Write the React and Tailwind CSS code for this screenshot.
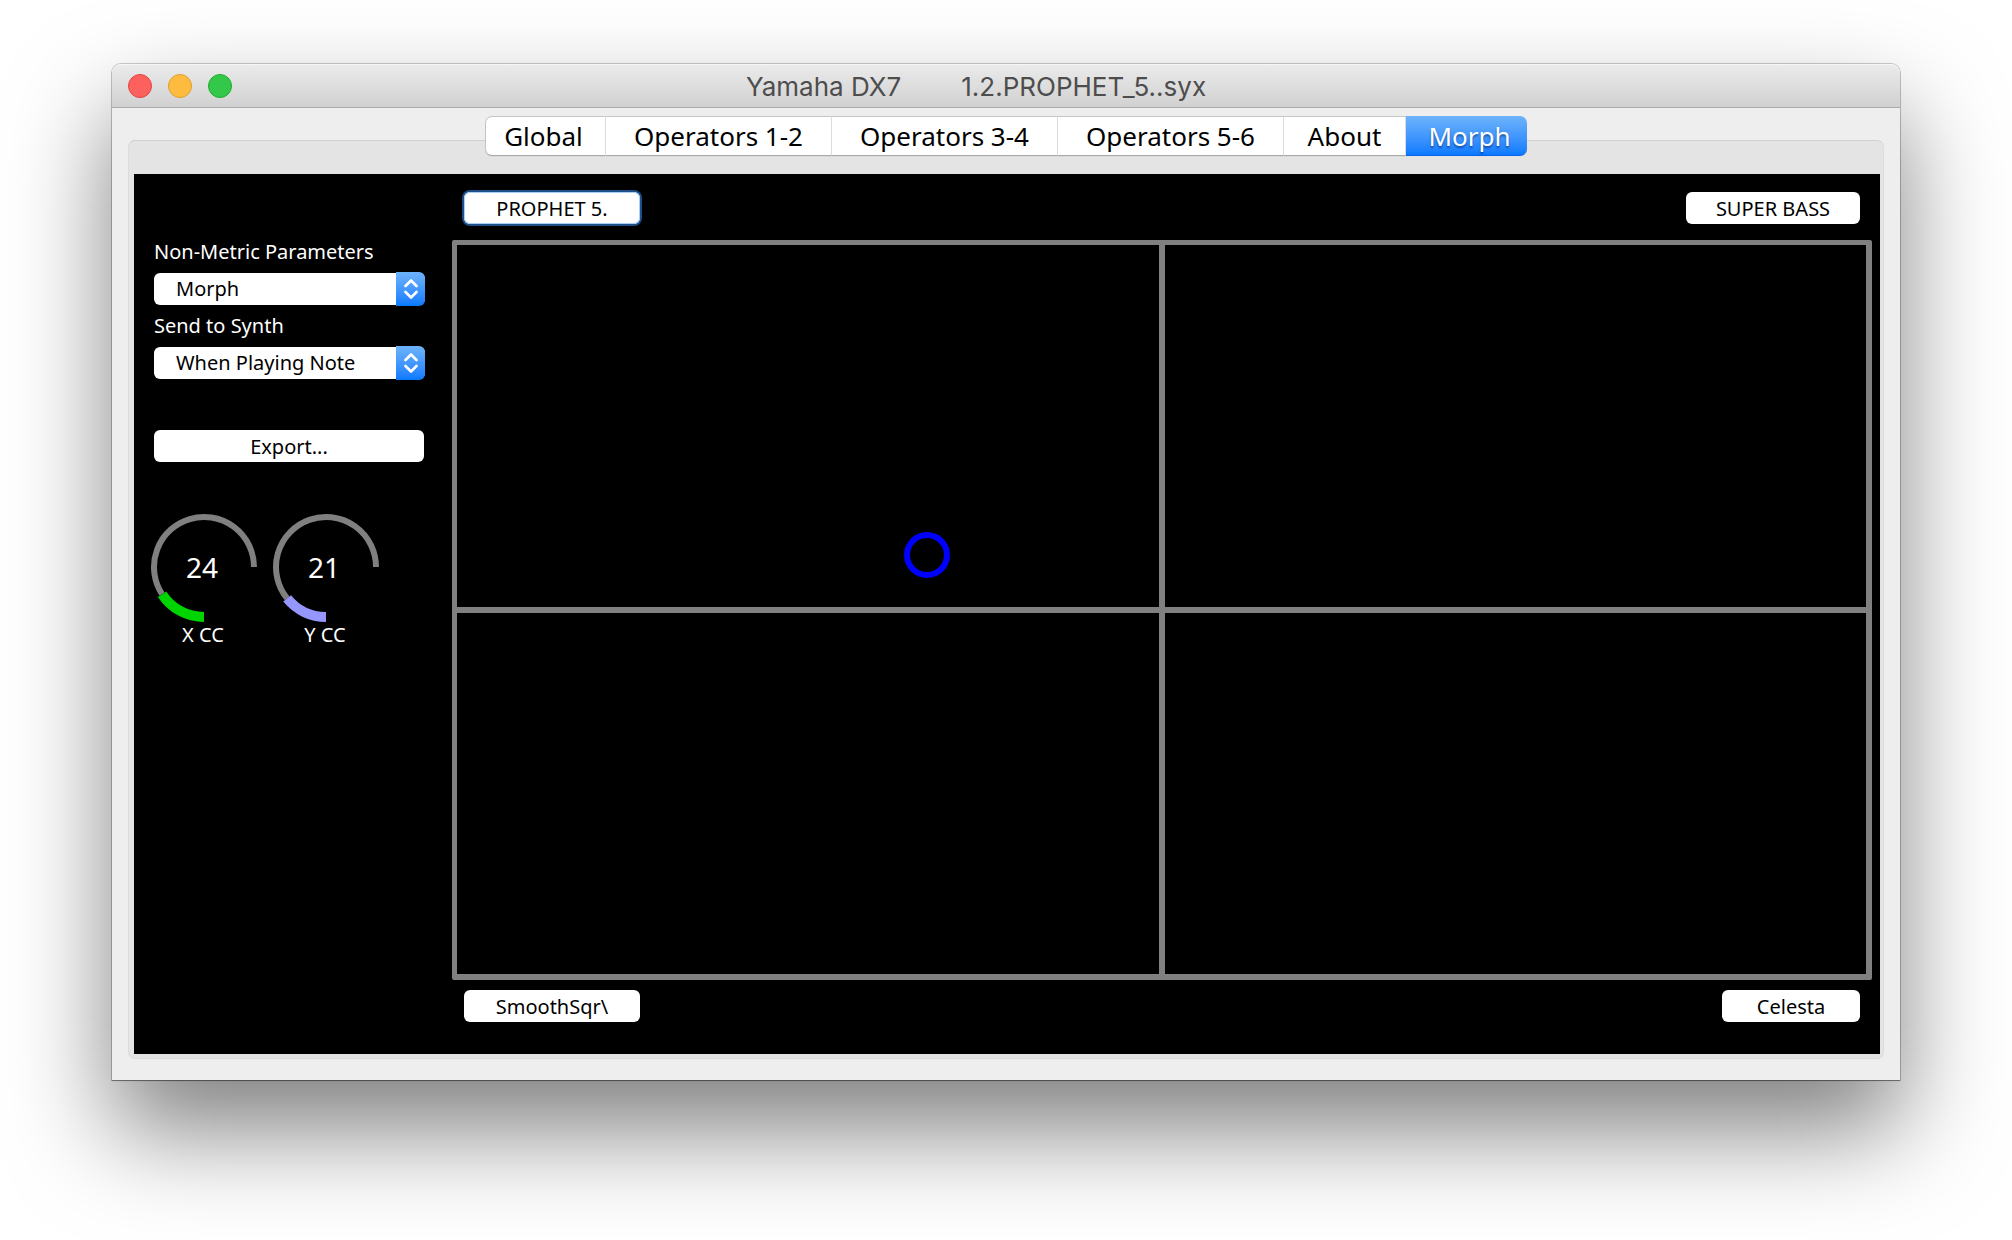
import React from "react";

const TABS = [
  { label: "Global", width: "w-[121px]" },
  { label: "Operators 1-2", width: "w-[226px]" },
  { label: "Operators 3-4", width: "w-[226px]" },
  { label: "Operators 5-6", width: "w-[226px]" },
  { label: "About", width: "w-[122px]" },
  { label: "Morph", width: "w-[121px]", active: true },
];

function TrafficLight({ label, color }) {
  return <button type="button" aria-label={label} className={`size-6 rounded-full border ${color}`} />;
}

function TitleBar() {
  return (
    <header className="flex h-11 items-center rounded-t-[9px] border-b border-[#acacac] bg-linear-to-b from-[#ebebeb] to-[#d1d1d1] px-4 shadow-[inset_0_1px_0_#f6f6f6]">
      <div className="flex flex-1 gap-4">
        <TrafficLight label="Close" color="border-[#e2463f] bg-[#fc615d]" />
        <TrafficLight label="Minimize" color="border-[#dfa023] bg-[#fdbc40]" />
        <TrafficLight label="Zoom" color="border-[#1dad2b] bg-[#34c84a]" />
      </div>
      <h1 className="flex gap-[60px] pt-0.5 pr-[60px] font-[Inter,sans-serif] text-[26px] leading-8 whitespace-nowrap text-[#4d4d4d]">
        <span>Yamaha DX7</span>
        <span>1.2.PROPHET_5..syx</span>
      </h1>
      <div className="flex-1" />
    </header>
  );
}

function Tabs() {
  return (
    <div role="tablist" className="relative z-10 flex h-10 justify-center text-[26px] leading-9">
      {TABS.map((t, i) => (
        <button
          key={t.label}
          type="button"
          role="tab"
          aria-selected={!!t.active}
          className={`${t.width} h-10 whitespace-nowrap ${i === 0 ? "rounded-l-[7px] border-l border-l-[#c4c4c4] pr-1" : ""} ${
            t.active
              ? "rounded-r-[7px] border-b border-[#0a62e8] bg-linear-to-b from-[#6db3fa] to-[#067aff] pl-1.5 text-white [text-shadow:0_2px_2px_rgba(0,30,90,0.55)]"
              : "border-t border-r border-b border-t-[#c6c6c6] border-r-[#dcdcdc] border-b-[#a9a9a9] bg-white text-black shadow-[0_1px_0_#dadada]"
          }`}
        >
          {t.label}
        </button>
      ))}
    </div>
  );
}

function Picker({ id, label, options }) {
  return (
    <div>
      <label htmlFor={id} className="block text-[20px] leading-6 text-white">
        {label}
      </label>
      <div className="relative mt-2 h-[34px]">
        <select
          id={id}
          className="my-px h-8 w-full appearance-none rounded-md bg-white pl-[22px] text-[20px] leading-8 text-black"
        >
          {options.map((o) => (
            <option key={o}>{o}</option>
          ))}
        </select>
        <span className="pointer-events-none absolute inset-y-0 right-0 flex w-[29px] items-center justify-center rounded-r-md bg-linear-to-b from-[#6db3fa] to-[#067aff]">
          <svg width="14" height="20" viewBox="0 0 14 20" fill="none" stroke="#fff" strokeWidth="2.6" strokeLinecap="round" strokeLinejoin="round">
            <path d="M1.500 7 7 1.500l5.500 5.500M1.500 13 7 18.500l5.500-5.500" />
          </svg>
        </span>
      </div>
    </div>
  );
}

function PatchButton({ children, focused = false, width }) {
  return (
    <button
      type="button"
      className={`h-8 ${width} rounded-md bg-white pt-px text-[20px] leading-8 whitespace-nowrap text-black ${
        focused ? "shadow-[inset_0_0_0_1px_#a5cdf8,0_0_0_2px_#1d4f88]" : ""
      }`}
    >
      {children}
    </button>
  );
}

function Knob({ value, label, color, end }) {
  const rad = (end * Math.PI) / 180;
  const x = 54 - 50 * Math.sin(rad);
  const y = 54 + 50 * Math.cos(rad);
  return (
    <div className="w-[122px]">
      <div className="relative size-[108px]">
        <svg width="108" height="110" viewBox="0 0 108 110" fill="none" className="block">
          <path d={`M${x} ${y}A50 50 0 1 1 104 54`} stroke="#808080" strokeWidth="6" />
          <path d={`M54 104A50 50 0 0 1 ${x} ${y}`} stroke={color} strokeWidth="10" />
        </svg>
        <span className="absolute inset-0 flex items-center justify-center pr-1 text-[28px] leading-none text-white">{value}</span>
      </div>
      <div className="w-[106px] pt-0.5 text-center text-[20px] leading-6 text-white">{label}</div>
    </div>
  );
}

function MorphPad() {
  return (
    <div className="relative grid flex-1 grid-cols-2 grid-rows-2 gap-1.5 rounded-[2px] border-[5px] border-r-[6px] border-b-[6px] border-[#808080] bg-[#808080]">
      <div className="bg-black" />
      <div className="bg-black" />
      <div className="bg-black" />
      <div className="bg-black" />
      <div className="absolute top-[42.5%] left-1/3 size-[46px] -translate-1/2 rounded-full border-[6px] border-[#0000ff]" />
    </div>
  );
}

export default function App() {
  return (
    <div className="flex min-h-screen flex-col bg-white px-28 pt-16 pb-40 font-['Noto_Sans',sans-serif]">
      <main className="flex flex-1 flex-col rounded-t-[9px] bg-[#eeeeee] shadow-[0_0_0_1px_rgba(0,0,0,0.2),0_1px_1px_0_rgba(0,0,0,0.35),0_50px_100px_rgba(0,0,0,0.5)]">
        <TitleBar />
        <div className="flex flex-1 flex-col px-4 pt-2 pb-[21px]">
          <Tabs />
          <section className="-mt-4 flex flex-1 flex-col rounded-[7px] border border-[#dcdcdc] border-t-[#d0d0d0] bg-[#e4e4e4] pt-[33px] pr-[3px] pb-1 pl-[5px]">
            <div className="flex flex-1 bg-black pr-2">
              <aside className="w-[318px] pt-[66px] pl-5">
                <div className="flex w-[271px] flex-col gap-2">
                  <Picker id="non-metric" label="Non-Metric Parameters" options={["Morph"]} />
                  <Picker id="send" label="Send to Synth" options={["When Playing Note"]} />
                </div>
                <div className="mt-[50px] flex w-[270px] flex-col">
                  <PatchButton width="w-full">Export...</PatchButton>
                </div>
                <div className="-ml-1 mt-[51px] flex">
                  <Knob value={24} label="X CC" color="#00d400" end={57} />
                  <Knob value={21} label="Y CC" color="#9696ff" end={51} />
                </div>
              </aside>
              <div className="flex flex-1 flex-col pt-[18px] pb-8">
                <div className="mb-4 flex justify-between px-3">
                  <PatchButton focused width="w-44">PROPHET 5.</PatchButton>
                  <PatchButton width="w-[174px]">SUPER BASS</PatchButton>
                </div>
                <MorphPad />
                <div className="mt-2.5 flex justify-between px-3">
                  <PatchButton width="w-44">SmoothSqr\</PatchButton>
                  <PatchButton width="w-[138px]">Celesta</PatchButton>
                </div>
              </div>
            </div>
          </section>
        </div>
      </main>
    </div>
  );
}
